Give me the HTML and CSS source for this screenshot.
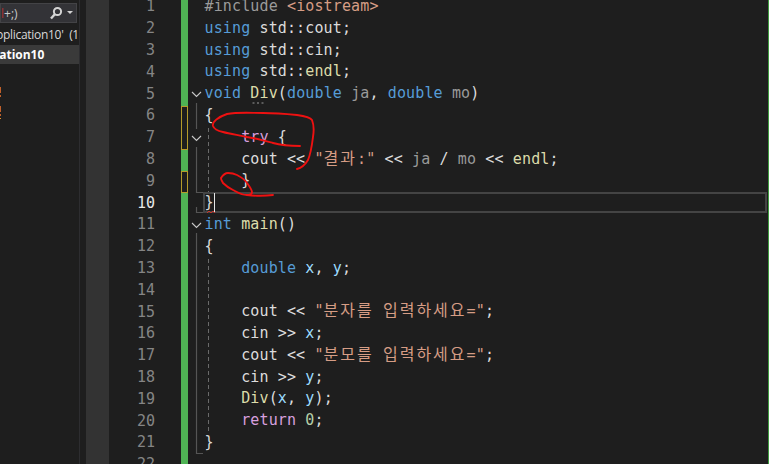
FILE: index.html
```html
<!DOCTYPE html>
<html lang="ko">
<head>
<meta charset="utf-8">
<title>Editor</title>
<link rel="stylesheet" href="styles.css">
</head>
<body>
<div class="app">
  <aside class="side">
    <div class="search">
      <span class="search-text"><b class="clip">l</b>+;)</span>
      <svg class="search-icon" width="26" height="14" viewBox="0 0 26 14"><circle cx="7.5" cy="5.5" r="3.6" fill="none" stroke="#d4d4d4" stroke-width="2"/><path d="M5 8 L1 12.5" stroke="#d4d4d4" stroke-width="2.4"/><path d="M17 5h6l-3 3z" fill="#d4d4d4"/></svg>
    </div>
    <div class="tree-row">pplication10'&nbsp;&nbsp;(1</div>
    <div class="tree-row active">cation10</div>
    <div class="err"><i></i><i class="short"></i></div>
    <div class="err second"><i></i><i class="short"></i><i class="tiny"></i></div>
  </aside>
  <div class="strip"></div>
  <div class="margin"></div>
  <main class="editor">
    <div class="line"><span class="num">1</span><span class="bar"></span><code><span class="pp">#include</span> <span class="str">&lt;iostream&gt;</span></code></div>
    <div class="line"><span class="num">2</span><span class="bar"></span><code><span class="kw">using</span> std::cout;</code></div>
    <div class="line"><span class="num">3</span><span class="bar"></span><code><span class="kw">using</span> std::cin;</code></div>
    <div class="line"><span class="num">4</span><span class="bar"></span><code><span class="kw">using</span> std::<span class="fn">endl</span>;</code></div>
    <div class="line"><span class="num">5</span><span class="bar"></span><code><span class="kw">void</span> <span class="fn">Div</span>(<span class="kw">double</span> <span class="par">ja</span>, <span class="kw">double</span> <span class="par">mo</span>)</code></div>
    <div class="line"><span class="num">6</span><span class="bar edit-top"></span><code>{</code></div>
    <div class="line"><span class="num">7</span><span class="bar edit-bottom"></span><code>    <span class="ctl">try</span> {</code></div>
    <div class="line"><span class="num">8</span><span class="bar"></span><code>    cout &lt;&lt; <span class="str">"<span class="ko">결과</span>:"</span> &lt;&lt; <span class="par">ja</span> / <span class="par">mo</span> &lt;&lt; <span class="fn">endl</span>;</code></div>
    <div class="line"><span class="num">9</span><span class="bar edit"></span><code>    }</code></div>
    <div class="line current"><span class="num">10</span><span class="bar"></span><code>}</code></div>
    <div class="line"><span class="num">11</span><span class="bar"></span><code><span class="kw">int</span> <span class="fn">main</span>()</code></div>
    <div class="line"><span class="num">12</span><span class="bar"></span><code>{</code></div>
    <div class="line"><span class="num">13</span><span class="bar"></span><code>    <span class="kw">double</span> <span class="var">x</span>, <span class="var">y</span>;</code></div>
    <div class="line"><span class="num">14</span><span class="bar"></span><code></code></div>
    <div class="line"><span class="num">15</span><span class="bar"></span><code>    cout &lt;&lt; <span class="str">"<span class="ko">분자를</span> <span class="ko">입력하세요</span>="</span>;</code></div>
    <div class="line"><span class="num">16</span><span class="bar"></span><code>    cin &gt;&gt; <span class="var">x</span>;</code></div>
    <div class="line"><span class="num">17</span><span class="bar"></span><code>    cout &lt;&lt; <span class="str">"<span class="ko">분모를</span> <span class="ko">입력하세요</span>="</span>;</code></div>
    <div class="line"><span class="num">18</span><span class="bar"></span><code>    cin &gt;&gt; <span class="var">y</span>;</code></div>
    <div class="line"><span class="num">19</span><span class="bar"></span><code>    <span class="fn">Div</span>(<span class="var">x</span>, <span class="var">y</span>);</code></div>
    <div class="line"><span class="num">20</span><span class="bar"></span><code>    <span class="ctl">return</span> <span class="lit">0</span>;</code></div>
    <div class="line"><span class="num">21</span><span class="bar"></span><code>}</code></div>
    <div class="line"><span class="num">22</span><span class="bar"></span><code></code></div>
  </main>
</div>
<svg class="overlay" width="769" height="464" viewBox="0 0 769 464" fill="none">
  <path d="M192 92l4.500 4.500 4.500-4.500M192 136l4.500 4.500 4.500-4.500M192 223l4.500 4.500 4.500-4.500" stroke="#c8c8c8" stroke-width="1.100"/>
  <path d="M196.500 103V129M196.500 147V193M196.500 192.500H203M196.500 207V212.500H203M196.500 233V453.500H203" stroke="#555" stroke-width="1.200"/>
  <path d="M208.500 128V192M208.500 259V431" stroke="#6a6a6a" stroke-dasharray="4 3"/>
  <path d="M252.500 103h2M257 103h2M261.500 103h2" stroke="#9a9a9a"/>
  <path d="M207 213l2-2 2 2 2-2 2 2" stroke="#c8352b"/>
  <path d="M214.500 193V212" stroke="#e6e6e6"/>
  <path d="M300 146C290 146 280 145 273 143C262 140 255 138 247 137C238 135 230 134 223 132C218 131 214 129 213 126C212 122 218 117 227 114C238 112 250 113 263 113C275 113 287 114 297 115C304 116 310 117 312 120C314 125 314 131 313 137C312 145 311 153 308 160C305 165 301 168 297 169" stroke="#ee1111" stroke-width="1.900" stroke-linecap="round"/>
  <path d="M221 178C223 175 225 173 228 173C232 173 235 174 237 175C241 177 245 180 247 183C250 187 252 190 252 192C252 194 250 195 247 195C241 195 237 192 233 190C229 188 226 186 223 183C222 181 221 180 221 178Z" stroke="#ee1111" stroke-width="1.900" stroke-linecap="round"/>
  <path d="M247 195C256 196 265 196 273 195" stroke="#ee1111" stroke-width="1.900" stroke-linecap="round"/>
</svg>
</body>
</html>
```
FILE: styles.css
```css
html, body {
  margin: 0;
  padding: 0;
  height: 100%;
  overflow: hidden;
  background: #1e1e1e;
}
.app {
  display: flex;
  height: 464px;
  overflow: hidden;
}
.side {
  width: 79px;
  flex: none;
  background: #1e1e1e;
  border-right: 1px solid #2d2d30;
  font: 12px "Open Sans", "Noto Sans", sans-serif;
  color: #d8d8d8;
  overflow: hidden;
  white-space: nowrap;
}
.search {
  display: flex;
  align-items: center;
  justify-content: space-between;
  height: 20px;
  margin: 3px 2px 0 0;
  padding-right: 1px;
  background: #333337;
  box-shadow: inset 0 0 0 1px #434346;
}
.search-text { color: #c8c8c8; font-size: 12px; margin-left: 1px; }
.clip { color: #b03030; font-weight: 400; }
.search-icon { flex: none; }
.tree-row {
  height: 22px;
  line-height: 24px;
  margin-left: -4px;
  letter-spacing: -0.3px;
}
.active {
  background: #3a3a3a;
  color: #fff;
  font-weight: 700;
  height: 19px;
  line-height: 19px;
  margin-left: 0;
  letter-spacing: 0;
  text-indent: -7px;
}
.err {
  display: flex;
  flex-direction: column;
  gap: 2px;
  margin-top: 23px;
}
.err i {
  display: block;
  width: 1px;
  height: 6px;
  background: #c0602a;
}
.err i.short { height: 2px; }
.err i.tiny { height: 1px; background: #e09030; }
.second { margin-top: 9px; }
.strip {
  width: 6px;
  flex: none;
  background: #1e1e1e;
}
.margin {
  width: 23px;
  flex: none;
  background: #333333;
}
.editor {
  flex: 1;
  min-width: 0;
  margin-top: -3px;
  background: #1e1e1e;
  box-shadow: inset -1px 0 0 #3f9a3f;
}
.line {
  display: flex;
  height: 21.8px;
  line-height: 21.8px;
  font-size: 15px;
  font-family: "DejaVu Sans Mono", "Noto Sans CJK KR", monospace;
}
.num {
  width: 46px;
  flex: none;
  text-align: right;
  color: #858585;
  margin-top: -0.6px;
}
.bar {
  width: 7px;
  flex: none;
  margin-left: 26px;
  background: #4fb354;
  box-sizing: border-box;
}
.bar.edit,
.bar.edit-top,
.bar.edit-bottom {
  background: #1e1e1e;
  border: 1px solid #b59b2a;
}
.bar.edit-top { border-bottom: 0; }
.bar.edit-bottom { border-top: 0; }
code {
  font: inherit;
  letter-spacing: 0.13px;
  margin: -1px 0 0 16.5px;
  white-space: pre;
  color: #dcdcdc;
}
.current .num { color: #e8e8e8; }
.current code { flex: 1; }
.current { position: relative; }
.current::after {
  content: "";
  position: absolute;
  left: 94px;
  right: 2px;
  top: -1px;
  bottom: 2px;
  border: 2px solid #444;
  pointer-events: none;
}
.pp { color: #9b9b9b; }
.kw { color: #569cd6; }
.fn { color: #dcdcaa; }
.par { color: #9a9a9a; }
.var { color: #9cdcfe; }
.ctl { color: #d8a0df; }
.lit { color: #b5cea8; }
.str { color: #d69d85; }
.ko {
  font-family: "Noto Sans CJK KR", sans-serif;
  font-size: 16px;
  line-height: 0;
  letter-spacing: 2px;
}
.overlay {
  position: absolute;
  left: 0;
  top: 0;
  pointer-events: none;
}
```
